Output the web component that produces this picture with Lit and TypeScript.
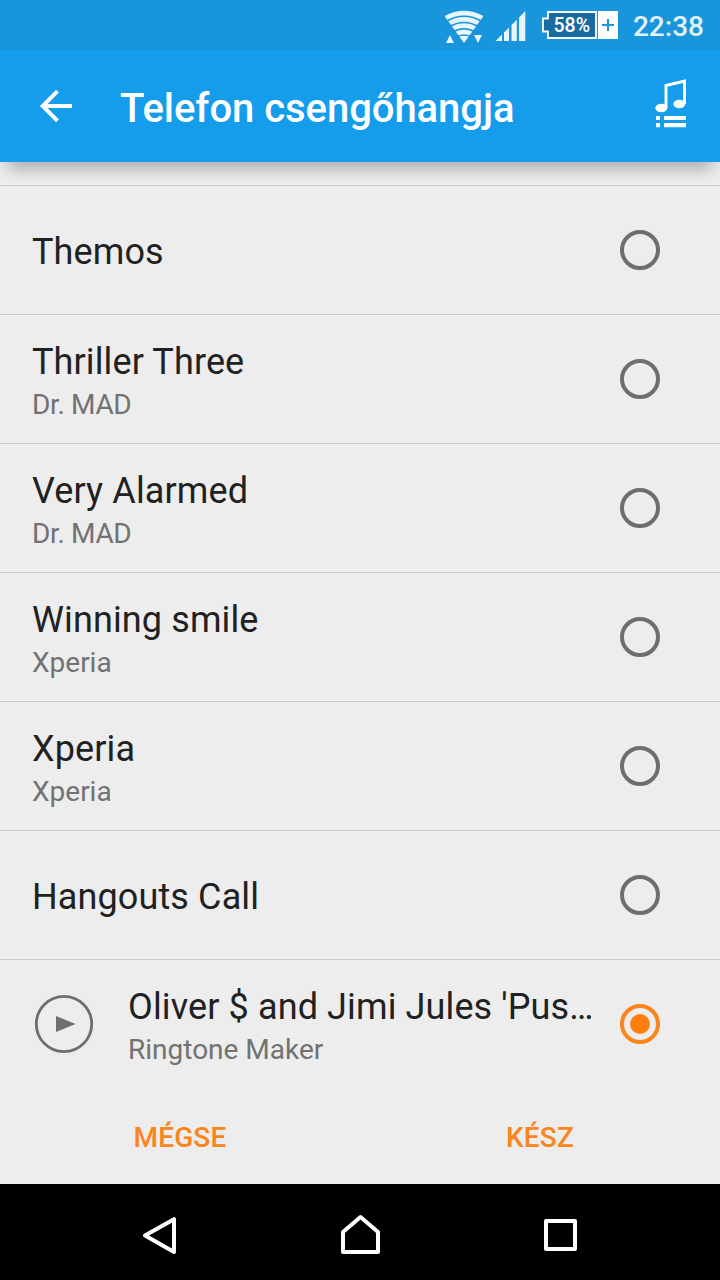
import { LitElement, html, css, svg } from "lit";
import { customElement, property, state } from "lit/decorators.js";
import { classMap } from "lit/directives/class-map.js";

interface Tone {
  title: string;
  artist?: string;
  playable?: boolean;
}

const TONES: Tone[] = [
  { title: "Themos" },
  { title: "Thriller Three", artist: "Dr. MAD" },
  { title: "Very Alarmed", artist: "Dr. MAD" },
  { title: "Winning smile", artist: "Xperia" },
  { title: "Xperia", artist: "Xperia" },
  { title: "Hangouts Call" },
  { title: "Oliver $ and Jimi Jules 'Pus…", artist: "Ringtone Maker", playable: true },
];

@customElement("status-bar")
class StatusBar extends LitElement {
  static styles = css`
    :host {
      display: flex;
      height: 50px;
      background: #1995db;
      justify-content: flex-end;
      padding-right: 16px;
      box-sizing: border-box;
    }
    .icons { display: block; flex: none; }
    .pct { font: 500 20.5px Roboto, sans-serif; fill: #fff; }
    .clock {
      width: 72px;
      margin-left: 12px;
      font: 500 28px/54px Roboto, sans-serif;
      color: #e0f2fd;
      text-align: right;
      white-space: nowrap;
    }
  `;

  render() {
    return html`
      <svg class="icons" width="180" height="50" viewBox="440 0 180 50">
        <g fill="#e6f5fe">
          <path d="M464 43L444.500 16Q464 5.500 483.500 16Z" />
          <path d="M446 43h8l-4-8zM474 35h8l-4 8z" />
          <path d="M495.500 41L502 34.500V41ZM504 41V32.500L509 27.500V41ZM511.500 41V25L516.800 19.700V41ZM519 41V17.500L525.300 11V41Z" />
        </g>
        <g fill="none" stroke="#1995db" stroke-width="1.700">
          <path d="M446 21.500Q464 11 482 21.500" />
          <path d="M449 27Q464 18 479 27" />
          <path d="M452 32.500Q464 25 476 32.500" />
          <path d="M456 37.500Q464 32.500 472 37.500" />
        </g>
        <path d="M548 12H596V38H548V31.500H543V18.500H548Z" fill="#176b9f" stroke="#fff" stroke-width="1.800" />
        <rect x="598" y="11" width="20" height="28" fill="#fff" />
        <path d="M602 25H614M608 19V31" stroke="#1995db" stroke-width="2" />
        <text class="pct" x="553.500" y="32.200" textLength="36.500" lengthAdjust="spacingAndGlyphs">58%</text>
      </svg>
      <div class="clock">22:38</div>
    `;
  }
}

@customElement("title-bar")
class TitleBar extends LitElement {
  @property() heading = "";

  static styles = css`
    :host {
      display: flex;
      align-items: center;
      height: 112px;
      padding: 0 32px 0 36px;
      box-sizing: border-box;
      background: #159deb;
      color: #fff;
      box-shadow: 0 16px 14px -8px rgba(0, 0, 0, 0.25);
      position: relative;
      z-index: 1;
    }
    .back { flex: none; display: block; }
    .heading {
      flex: 1;
      margin: 0 0 0 44px;
      padding-top: 6px;
      font: 500 40px/48px Roboto, sans-serif;
      letter-spacing: -0.05px;
      white-space: nowrap;
    }
    .notes { flex: none; display: block; }
  `;

  render() {
    return html`
      <svg class="back" width="40" height="112" viewBox="36 50 40 112">
        <path d="M72 106H43M57.500 91.200L42.700 106L57.500 120.800" fill="none" stroke="#fff" stroke-width="4" />
      </svg>
      <h1 class="heading">${this.heading}</h1>
      <svg class="notes" width="36" height="112" viewBox="652 50 36 112">
        <path d="M666 108V85.500L684.500 81.200V104" fill="none" stroke="#fff" stroke-width="2.900" />
        <ellipse cx="661.300" cy="108" rx="6" ry="4.200" fill="#fff" />
        <ellipse cx="679.300" cy="104" rx="6" ry="4.200" fill="#fff" />
        <path d="M656 116h4v4h-4zM664 116h22v4h-22zM656 123h4v4.300h-4zM664 123h22v4.300h-22z" fill="#fff" />
      </svg>
    `;
  }
}

@customElement("tone-row")
class ToneRow extends LitElement {
  @property({ attribute: false }) tone!: Tone;
  @property({ type: Boolean }) selected = false;

  static styles = css`
    :host {
      display: flex;
      align-items: center;
      height: 129px;
      box-sizing: border-box;
      padding: 0 60px 0 32px;
      border-top: 1px solid #cbcbcb;
      font-family: Roboto, sans-serif;
    }
    .play { flex: none; display: block; margin-right: 32px; }
    .labels { flex: 1; min-width: 0; padding-top: 5px; }
    .labels.double { padding-top: 8px; }
    .title {
      font-size: 36px;
      line-height: 43px;
      letter-spacing: 0.12px;
      color: #212121;
      white-space: nowrap;
    }
    .artist { font-size: 28px; line-height: 42px; color: #727272; white-space: nowrap; }
    .artist.tight { letter-spacing: -0.35px; }
    .radio { flex: none; display: block; margin-left: 24px; }
  `;

  render() {
    const { title, artist, playable } = this.tone;
    const color = this.selected ? "#fb841c" : "#6e6e6e";
    return html`
      ${playable
        ? html`<svg class="play" width="64" height="64" viewBox="0 0 64 64">
            <circle cx="32" cy="32" r="27.700" fill="none" stroke="#6e6e6e" stroke-width="2.800" />
            <path d="M24 24L43.500 32L24 40Z" fill="#6e6e6e" />
          </svg>`
        : null}
      <div class=${classMap({ labels: true, double: !!artist })}>
        <div class="title">${title}</div>
        ${artist
          ? html`<div class=${classMap({ artist: true, tight: artist === "Dr. MAD" })}>${artist}</div>`
          : null}
      </div>
      <svg class="radio" width="40" height="40" viewBox="0 0 40 40">
        <circle cx="20" cy="20" r="18" fill="none" stroke=${color} stroke-width="4" />
        ${this.selected ? svg`<circle cx="20" cy="20" r="10" fill="#ff7f0e" />` : null}
      </svg>
    `;
  }
}

@customElement("nav-bar")
class NavBar extends LitElement {
  static styles = css`
    :host { display: flex; height: 96px; background: #000; justify-content: center; }
    .keys { display: block; }
  `;

  render() {
    return html`
      <svg class="keys" width="480" height="96" viewBox="120 1184 480 96">
        <g fill="none" stroke="#fff" stroke-width="4" stroke-linejoin="round">
          <path d="M174 1219.200V1252L145 1235.600Z" />
          <path d="M343 1252V1232L360.500 1217L378 1232V1252Z" />
          <path d="M546 1221H575V1249H546Z" />
        </g>
      </svg>
    `;
  }
}

@customElement("app-root")
class AppRoot extends LitElement {
  @state() private chosen = 6;

  static styles = css`
    :host {
      display: flex;
      flex-direction: column;
      width: 720px;
      height: 1280px;
      overflow: hidden;
      background: #ededed;
    }
    .list { flex: 1; padding-top: 23px; }
    .actions { display: grid; grid-template-columns: 1fr 1fr; height: 96px; }
    .action {
      border: 0;
      background: none;
      padding: 2px 0 0;
      font: 500 28px Roboto, sans-serif;
      letter-spacing: 0.15px;
      color: #fb841c;
    }
  `;

  render() {
    return html`
      <status-bar></status-bar>
      <title-bar heading="Telefon csengőhangja"></title-bar>
      <div class="list">
        ${TONES.map(
          (tone, i) => html`<tone-row
            .tone=${tone}
            ?selected=${i === this.chosen}
            @click=${() => (this.chosen = i)}
          ></tone-row>`
        )}
      </div>
      <div class="actions">
        <button class="action">MÉGSE</button>
        <button class="action">KÉSZ</button>
      </div>
      <nav-bar></nav-bar>
    `;
  }
}
